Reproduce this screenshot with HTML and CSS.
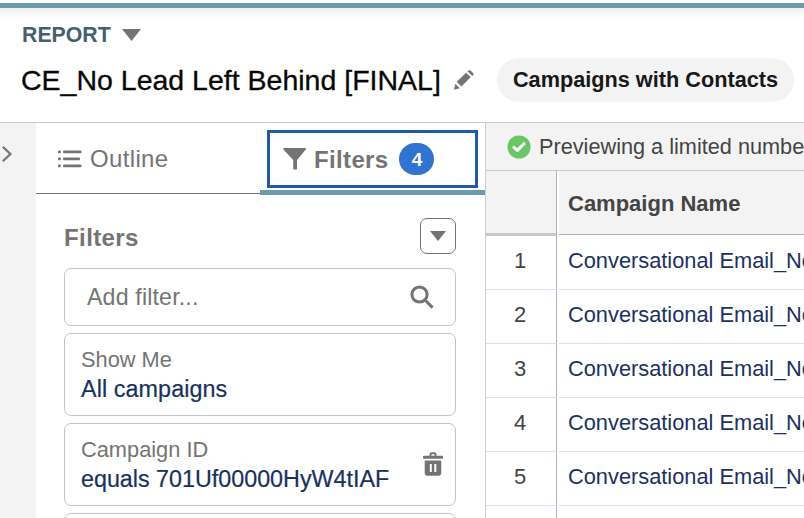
FILE: index.html
```html
<!DOCTYPE html>
<html lang="en">
<head>
    <meta charset="UTF-8">
    <meta name="viewport" content="width=device-width, initial-scale=1.0">
    <title>CE_No Lead Left Behind [FINAL]</title>
    <link rel="stylesheet" href="styles.css">
</head>
<body>
    <div class="top-bar"></div>

    <header class="report-header">
        <div class="report-type">
            <span>REPORT</span>
            <svg class="caret" width="19" height="12" viewBox="0 0 19 12"><path d="M0 0H19L9.5 12Z" fill="#747474"/></svg>
        </div>
        <div class="title-row">
            <h1>CE_No Lead Left Behind [FINAL]</h1>
            <svg class="pencil" width="20" height="20" viewBox="0 0 20 20" fill="#747474">
                <path d="M1.3 13.8L5.8 18.2L1 19.6Q0 19.8 .2 18.8Z"/>
                <path d="M2.7 11.8L12.1 2.7L16.8 7.1L7.4 16.5Z"/>
                <path d="M13.5 1.3L14.3 .6Q15.5-.4 16.8 .8L19 3Q20.1 4.3 19.1 5.3L18.2 6.1Z"/>
            </svg>
            <span class="pill">Campaigns with Contacts</span>
        </div>
    </header>

    <main class="builder">
        <aside class="rail">
            <svg width="10" height="16" viewBox="0 0 10 16"><path d="M.8 .8L8.4 8L.8 15.2" fill="none" stroke="#747474" stroke-width="2.2"/></svg>
        </aside>

        <section class="panel">
            <nav class="tabs">
                <div class="tab">
                    <svg width="24" height="18" viewBox="0 0 24 18" fill="#747474">
                        <rect x="0" y="0.5" width="2.8" height="2.8" rx=".8"/><rect x="5" y="0.5" width="18.5" height="2.8" rx="1"/>
                        <rect x="0" y="7.5" width="2.8" height="2.8" rx=".8"/><rect x="5" y="7.5" width="17" height="2.8" rx="1"/>
                        <rect x="0" y="14.5" width="2.8" height="2.8" rx=".8"/><rect x="5" y="14.5" width="18.5" height="2.8" rx="1"/>
                    </svg>
                    <span>Outline</span>
                </div>
                <div class="tab active">
                    <div class="tab-focus">
                        <svg width="24" height="22" viewBox="0 0 24 22"><path d="M.8 0H22.4Q23.6 .6 22.8 1.6L14 12V20.8Q14 21.6 13.2 21.6H11Q10.2 21.6 10.2 20.8V12L.4 1.6Q-.4 .5 .8 0Z" fill="#747474"/></svg>
                        <span>Filters</span>
                        <span class="badge">4</span>
                    </div>
                </div>
            </nav>

            <div class="filters">
                <div class="filters-head">
                    <h2>Filters</h2>
                    <button class="menu-btn">
                        <svg width="16" height="10" viewBox="0 0 16 10"><path d="M0 0H16L8 10Z" fill="#747474"/></svg>
                    </button>
                </div>
                <div class="search">
                    <span>Add filter...</span>
                    <svg width="24" height="24" viewBox="0 0 24 24" fill="none" stroke="#747474">
                        <circle cx="9.5" cy="9.5" r="7.6" stroke-width="3"/><path d="M14.8 14.8L22.6 22.6" stroke-width="3"/>
                    </svg>
                </div>
                <div class="card">
                    <div>
                        <div class="card-label">Show Me</div>
                        <div class="card-value all">All campaigns</div>
                    </div>
                </div>
                <div class="card">
                    <div>
                        <div class="card-label">Campaign ID</div>
                        <div class="card-value">equals 701Uf00000HyW4tIAF</div>
                    </div>
                    <svg width="20" height="24" viewBox="0 0 20 24">
                        <path d="M7.5 4V2.2Q7.5 1.2 8.5 1.2H11.5Q12.5 1.2 12.5 2.2V4" fill="none" stroke="#747474" stroke-width="2"/>
                        <rect x="0" y="3.7" width="20" height="3" rx=".8" fill="#747474"/>
                        <path fill-rule="evenodd" d="M2.4 8.6H17.6Q18.3 8.6 18.3 9.3V20.8Q18.3 23.7 15.4 23.7H4.6Q1.7 23.7 1.7 20.8V9.3Q1.7 8.6 2.4 8.6ZM6.8 12V20H8.8V12ZM11.3 12V20H13.3V12Z" fill="#747474"/>
                    </svg>
                </div>
                <div class="card"></div>
            </div>
        </section>

        <section class="preview">
            <div class="notice">
                <svg width="24" height="24" viewBox="0 0 24 24"><circle cx="12" cy="12" r="11.6" fill="#6bc667"/><path d="M7 12.3L10.4 15.4L17 8.7" fill="none" stroke="#fff" stroke-width="3" stroke-linecap="round" stroke-linejoin="round"/></svg>
                <span>Previewing a limited number</span>
            </div>
            <div class="grid">
                <div class="num num-head"></div>
                <div class="cell cell-head">Campaign Name</div>
                <div class="num">1</div>
                <div class="cell">Conversational Email_No</div>
                <div class="num">2</div>
                <div class="cell">Conversational Email_No</div>
                <div class="num">3</div>
                <div class="cell">Conversational Email_No</div>
                <div class="num">4</div>
                <div class="cell">Conversational Email_No</div>
                <div class="num">5</div>
                <div class="cell">Conversational Email_No</div>
                <div class="num"></div>
                <div class="cell"></div>
            </div>
        </section>
    </main>
</body>
</html>
```

FILE: styles.css
```css
* {
    margin: 0;
    padding: 0;
    box-sizing: border-box;
}

body {
    height: 518px;
    padding-top: 3px;
    overflow: hidden;
    background: #fff;
    font-family: "Liberation Sans", Arial, sans-serif;
    color: #444;
    white-space: nowrap;
}

svg {
    flex: none;
    display: block;
}

.top-bar {
    height: 5px;
    background: #6e9ab0;
}

.report-header {
    height: 115px;
    padding: 14px 10px 0 22px;
    border-bottom: 1px solid #c9c9c9;
    background: linear-gradient(#f0f0f0, #fff 10px);
}

.report-type {
    display: flex;
    align-items: center;
    gap: 11px;
    height: 25px;
    font-size: 21.3px;
    font-weight: bold;
    color: #45606d;
}

.report-type span {
    padding-top: 1px;
}

.title-row {
    display: flex;
    align-items: center;
    height: 44px;
    margin-top: 11px;
}

.title-row h1 {
    width: 433px;
    margin-left: -1px;
    font-size: 28.5px;
    font-weight: normal;
    line-height: 44px;
    color: #080707;
    -webkit-text-stroke: 0.3px #080707;
}

.pill {
    width: 297px;
    height: 44px;
    margin-left: 23px;
    border-radius: 22px;
    background: #f3f3f3;
    font-size: 21.7px;
    font-weight: bold;
    line-height: 43px;
    text-align: center;
    color: #181818;
}

.builder {
    display: flex;
    height: 395px;
}

.rail {
    width: 36px;
    padding: 23px 0 0 2px;
    background: #f3f3f3;
}

.panel {
    width: 450px;
    border-right: 1px solid #c5d0dc;
    overflow: hidden;
}

.tabs {
    display: flex;
    height: 72px;
}

.tab {
    display: flex;
    align-items: center;
    gap: 8px;
    width: 224px;
    height: 71px;
    padding: 2px 0 0 22px;
    border-bottom: 1px solid #747474;
    font-size: 24px;
    letter-spacing: 0.35px;
    color: #747474;
}

.tab.active {
    align-items: flex-start;
    width: 225px;
    height: 72px;
    padding: 7px 7px 0;
    border-bottom: 5px solid #6e9ab0;
    font-weight: bold;
}

.tab-focus {
    display: flex;
    align-items: center;
    gap: 7px;
    width: 211px;
    height: 58px;
    padding-left: 13px;
    border: 3px solid #2659a5;
}

.tab-focus span:not(.badge) {
    padding-top: 2px;
}

.badge {
    width: 35px;
    height: 32px;
    margin-left: 4px;
    border-radius: 16px;
    background: #3173d0;
    font-size: 19px;
    line-height: 33px;
    text-align: center;
    letter-spacing: 0;
    color: #fff;
}

.filters {
    padding: 23px 29px 0 28px;
}

.filters-head {
    display: flex;
    align-items: center;
    justify-content: space-between;
    height: 36px;
    margin-bottom: 14px;
}

.filters-head h2 {
    padding-top: 3px;
    font-size: 24px;
    letter-spacing: 0.4px;
    color: #747474;
}

.menu-btn {
    display: flex;
    align-items: center;
    justify-content: center;
    width: 36px;
    height: 36px;
    border: 1px solid #747474;
    border-radius: 7px;
    background: #fff;
}

.search {
    display: flex;
    align-items: center;
    justify-content: space-between;
    height: 58px;
    margin-bottom: 7px;
    padding: 0 21px 0 22px;
    border: 1px solid #c4c4c4;
    border-radius: 7px;
    font-size: 23.2px;
    letter-spacing: 0.15px;
    color: #747474;
}

.card {
    display: flex;
    align-items: center;
    justify-content: space-between;
    height: 82.5px;
    margin-bottom: 7.5px;
    padding: 0 12px 0 16px;
    border: 1px solid #c4c4c4;
    border-radius: 7px;
}

.card-label {
    font-size: 21.8px;
    line-height: 29px;
    color: #747474;
}

.card-value {
    font-size: 23.3px;
    line-height: 30px;
    color: #16325c;
    -webkit-text-stroke: 0.2px #16325c;
}

.card-value.all {
    letter-spacing: 0.1px;
}

.preview {
    flex: 1;
    min-width: 0;
    overflow: hidden;
}

.notice {
    display: flex;
    align-items: center;
    gap: 8px;
    height: 48px;
    padding-left: 21px;
    border-bottom: 1px solid #c9c9c9;
    background: #f3f3f3;
    font-size: 21.7px;
    color: #444;
}

.grid {
    display: grid;
    grid-template-columns: 71px 400px;
    column-gap: 2px;
    grid-template-rows: 65px;
    grid-auto-rows: 54px;
}

.num {
    padding-right: 2px;
    border-right: 1px solid #a4b4c4;
    border-bottom: 1px solid #dddbe6;
    font-size: 22px;
    line-height: 50px;
    text-align: center;
    color: #444;
}

.cell {
    padding-left: 9px;
    border-bottom: 1px solid #dddfe8;
    font-size: 21.8px;
    line-height: 49px;
    color: #1c3160;
}

.num-head {
    border-bottom: 3px solid #c9c9c9;
    background: #f3f3f3;
}

.cell-head {
    height: 64px;
    border-bottom-color: #a4b4c4;
    background: #f3f3f3;
    font-size: 22px;
    font-weight: bold;
    line-height: 65px;
    color: #444;
}
```
